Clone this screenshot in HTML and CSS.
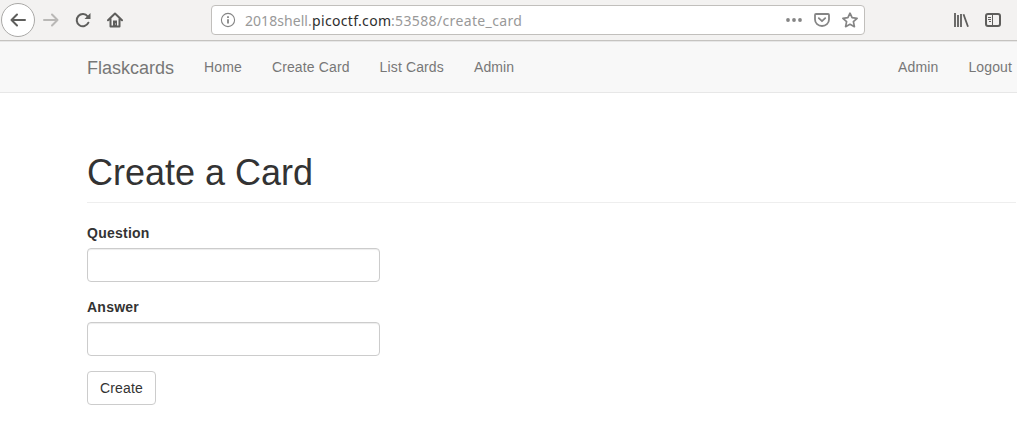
FILE: index.html
```html
<!DOCTYPE html>
<html lang="en">
<head>
<meta charset="utf-8">
<title>Flaskcards</title>
<link rel="stylesheet" href="styles.css">
</head>
<body>
<header class="toolbar">
  <div class="back"><svg class="icon" viewBox="0 0 16 16"><path d="M15 8H1.500M7 2.500 1.500 8 7 13.500"/></svg></div>
  <svg class="icon forward" viewBox="0 0 16 16"><path d="M1 8h13.500M9 2.500 14.500 8 9 13.500"/></svg>
  <svg class="icon reload" viewBox="0 0 16 16"><path d="M12.700 4.500A6.100 6.100 0 1 0 13.400 10.700"/><path class="solid" d="M15.500 1v6H9.500z"/></svg>
  <svg class="icon home" viewBox="0 0 16 16"><path d="M1 8.300 8 1.500l7 6.800M3.500 7v7.500h9V7"/><path class="solid" d="M6 8.500h4V15H6z"/><path class="knob" d="M8 11.500h1v1H8z"/></svg>
  <div class="address">
    <svg class="icon info" viewBox="0 0 16 16"><circle cx="8" cy="8" r="6.600"/><path class="stem" d="M8 7.200v4.300M8 4.300v1.700"/></svg>
    <div class="url"><span class="sub">2018shell.</span><span class="host">picoctf.com</span><span class="path">:53588/create_card</span></div>
    <svg class="icon dots" viewBox="0 0 16 16"><circle cx="2" cy="8" r="1.900"/><circle cx="8" cy="8" r="1.900"/><circle cx="14" cy="8" r="1.900"/></svg>
    <svg class="icon pocket" viewBox="0 0 16 16"><path d="M2 2h12q1 0 1 1v4.500a7 6.500 0 0 1-14 0V3q0-1 1-1z"/><path d="M4.800 6.200 8 9.200l3.200-3"/></svg>
    <svg class="icon star" viewBox="0 0 16 16"><path d="m8 1.200 2.100 4.500 5 .6-3.700 3.400 1 5L8 12.300l-4.400 2.400 1-5L.9 6.300l5-.6z"/></svg>
  </div>
  <svg class="icon library" viewBox="0 0 16 16"><path d="M2 1v14M5 3v12M8 2v13M10.500 2.300 15 14.700"/></svg>
  <svg class="icon sidebar" viewBox="0 0 16 16"><rect x="1" y="2" width="14" height="12" rx="2"/><path class="thin" d="M7.500 2v12M3 5.500h3M3 7.500h3M4 9.500h2"/></svg>
</header>
<nav class="navbar">
  <a class="brand">Flaskcards</a>
  <a class="link">Home</a>
  <a class="link">Create Card</a>
  <a class="link">List Cards</a>
  <a class="link">Admin</a>
  <a class="link push">Admin</a>
  <a class="link">Logout</a>
</nav>
<main class="content">
  <h1 class="title">Create a Card</h1>
  <form class="form">
    <div class="group"><label class="label" for="question">Question</label><input class="field" id="question" type="text"></div>
    <div class="group"><label class="label" for="answer">Answer</label><input class="field" id="answer" type="text"></div>
    <button class="button" type="button">Create</button>
  </form>
</main>
</body>
</html>
```

FILE: styles.css
```css
* { box-sizing: border-box; }
body {
  margin: 0;
  height: 444px;
  overflow: hidden;
  background: #fff;
  color: #333;
  font: 14px/20px "Liberation Sans", Arial, sans-serif;
}
.toolbar {
  display: flex;
  align-items: center;
  height: 41px;
  padding: 0 16px 0 1px;
  background: #f3f2f1;
  border-bottom: 1px solid #c5c3c0;
}
.icon {
  flex: none;
  width: 16px;
  height: 16px;
  fill: none;
  stroke: #5e5e5c;
  stroke-width: 2;
  stroke-linecap: round;
  stroke-linejoin: round;
}
.solid { fill: #5e5e5c; stroke: none; }
.knob { fill: #ddd; stroke: none; }
.back {
  display: flex;
  align-items: center;
  justify-content: center;
  width: 34px;
  height: 34px;
  background: #fff;
  border: 1px solid #aaa9a7;
  border-radius: 50%;
}
.forward { margin-left: 8px; stroke: #b9b8b6; }
.reload { margin-left: 16px; }
.home { margin-left: 16px; }
.address {
  display: flex;
  align-items: center;
  width: 654px;
  height: 30px;
  margin-left: 88px;
  padding: 0 6px 0 8px;
  background: #fff;
  border: 1px solid #c1bfbc;
  border-radius: 4px;
}
.info { stroke: #858585; stroke-width: 1.1; }
.stem { stroke-width: 1.8; stroke-linecap: butt; }
.url {
  display: flex;
  flex: 1;
  margin-left: 9px;
  padding-top: 1px;
  color: #999;
  font: 14px/20px "Noto Sans", sans-serif;
  white-space: nowrap;
}
.sub { width: 67px; letter-spacing: 0.05px; }
.host { width: 79px; color: #2e2e2e; letter-spacing: 0.33px; }
.path { letter-spacing: 0.36px; }
.dots { fill: #858585; stroke: none; }
.pocket { margin-left: 12px; stroke: #858585; stroke-width: 1.8; }
.star { margin-left: 12px; stroke: #858585; stroke-width: 1.7; }
.library { margin-left: 88px; stroke-width: 1.8; stroke-linecap: butt; }
.sidebar { margin-left: 16px; }
.thin { stroke-width: 1; stroke-linecap: butt; }
.navbar {
  display: flex;
  height: 52px;
  padding: 0 5px 0 87px;
  background: #f8f8f8;
  border: solid #e7e7e7;
  border-width: 1px 0;
  color: #777;
}
.brand { padding: 16px 0 14px; font-size: 18px; }
.link { padding: 15px 0; margin-left: 30px; letter-spacing: 0.13px; white-space: nowrap; }
.push { margin-left: auto; }
.content { padding: 60px 1px 0 87px; }
.title {
  height: 50px;
  margin: 0 0 20px;
  border-bottom: 1px solid #eee;
  font-size: 36px;
  font-weight: 500;
  line-height: 39.6px;
}
.form { width: 293px; }
.group { margin-bottom: 15px; }
.label { display: block; margin-bottom: 5px; font-weight: 700; letter-spacing: 0.25px; }
.field {
  display: block;
  width: 100%;
  height: 34px;
  padding: 6px 12px;
  border: 1px solid #ccc;
  border-radius: 4px;
  box-shadow: inset 0 1px 1px rgba(0, 0, 0, .075);
}
.button {
  display: block;
  width: 69px;
  height: 34px;
  padding: 6px 12px;
  border: 1px solid #ccc;
  border-radius: 4px;
  background: #fff;
  color: #333;
  font: inherit;
  letter-spacing: 0.15px;
}
```
